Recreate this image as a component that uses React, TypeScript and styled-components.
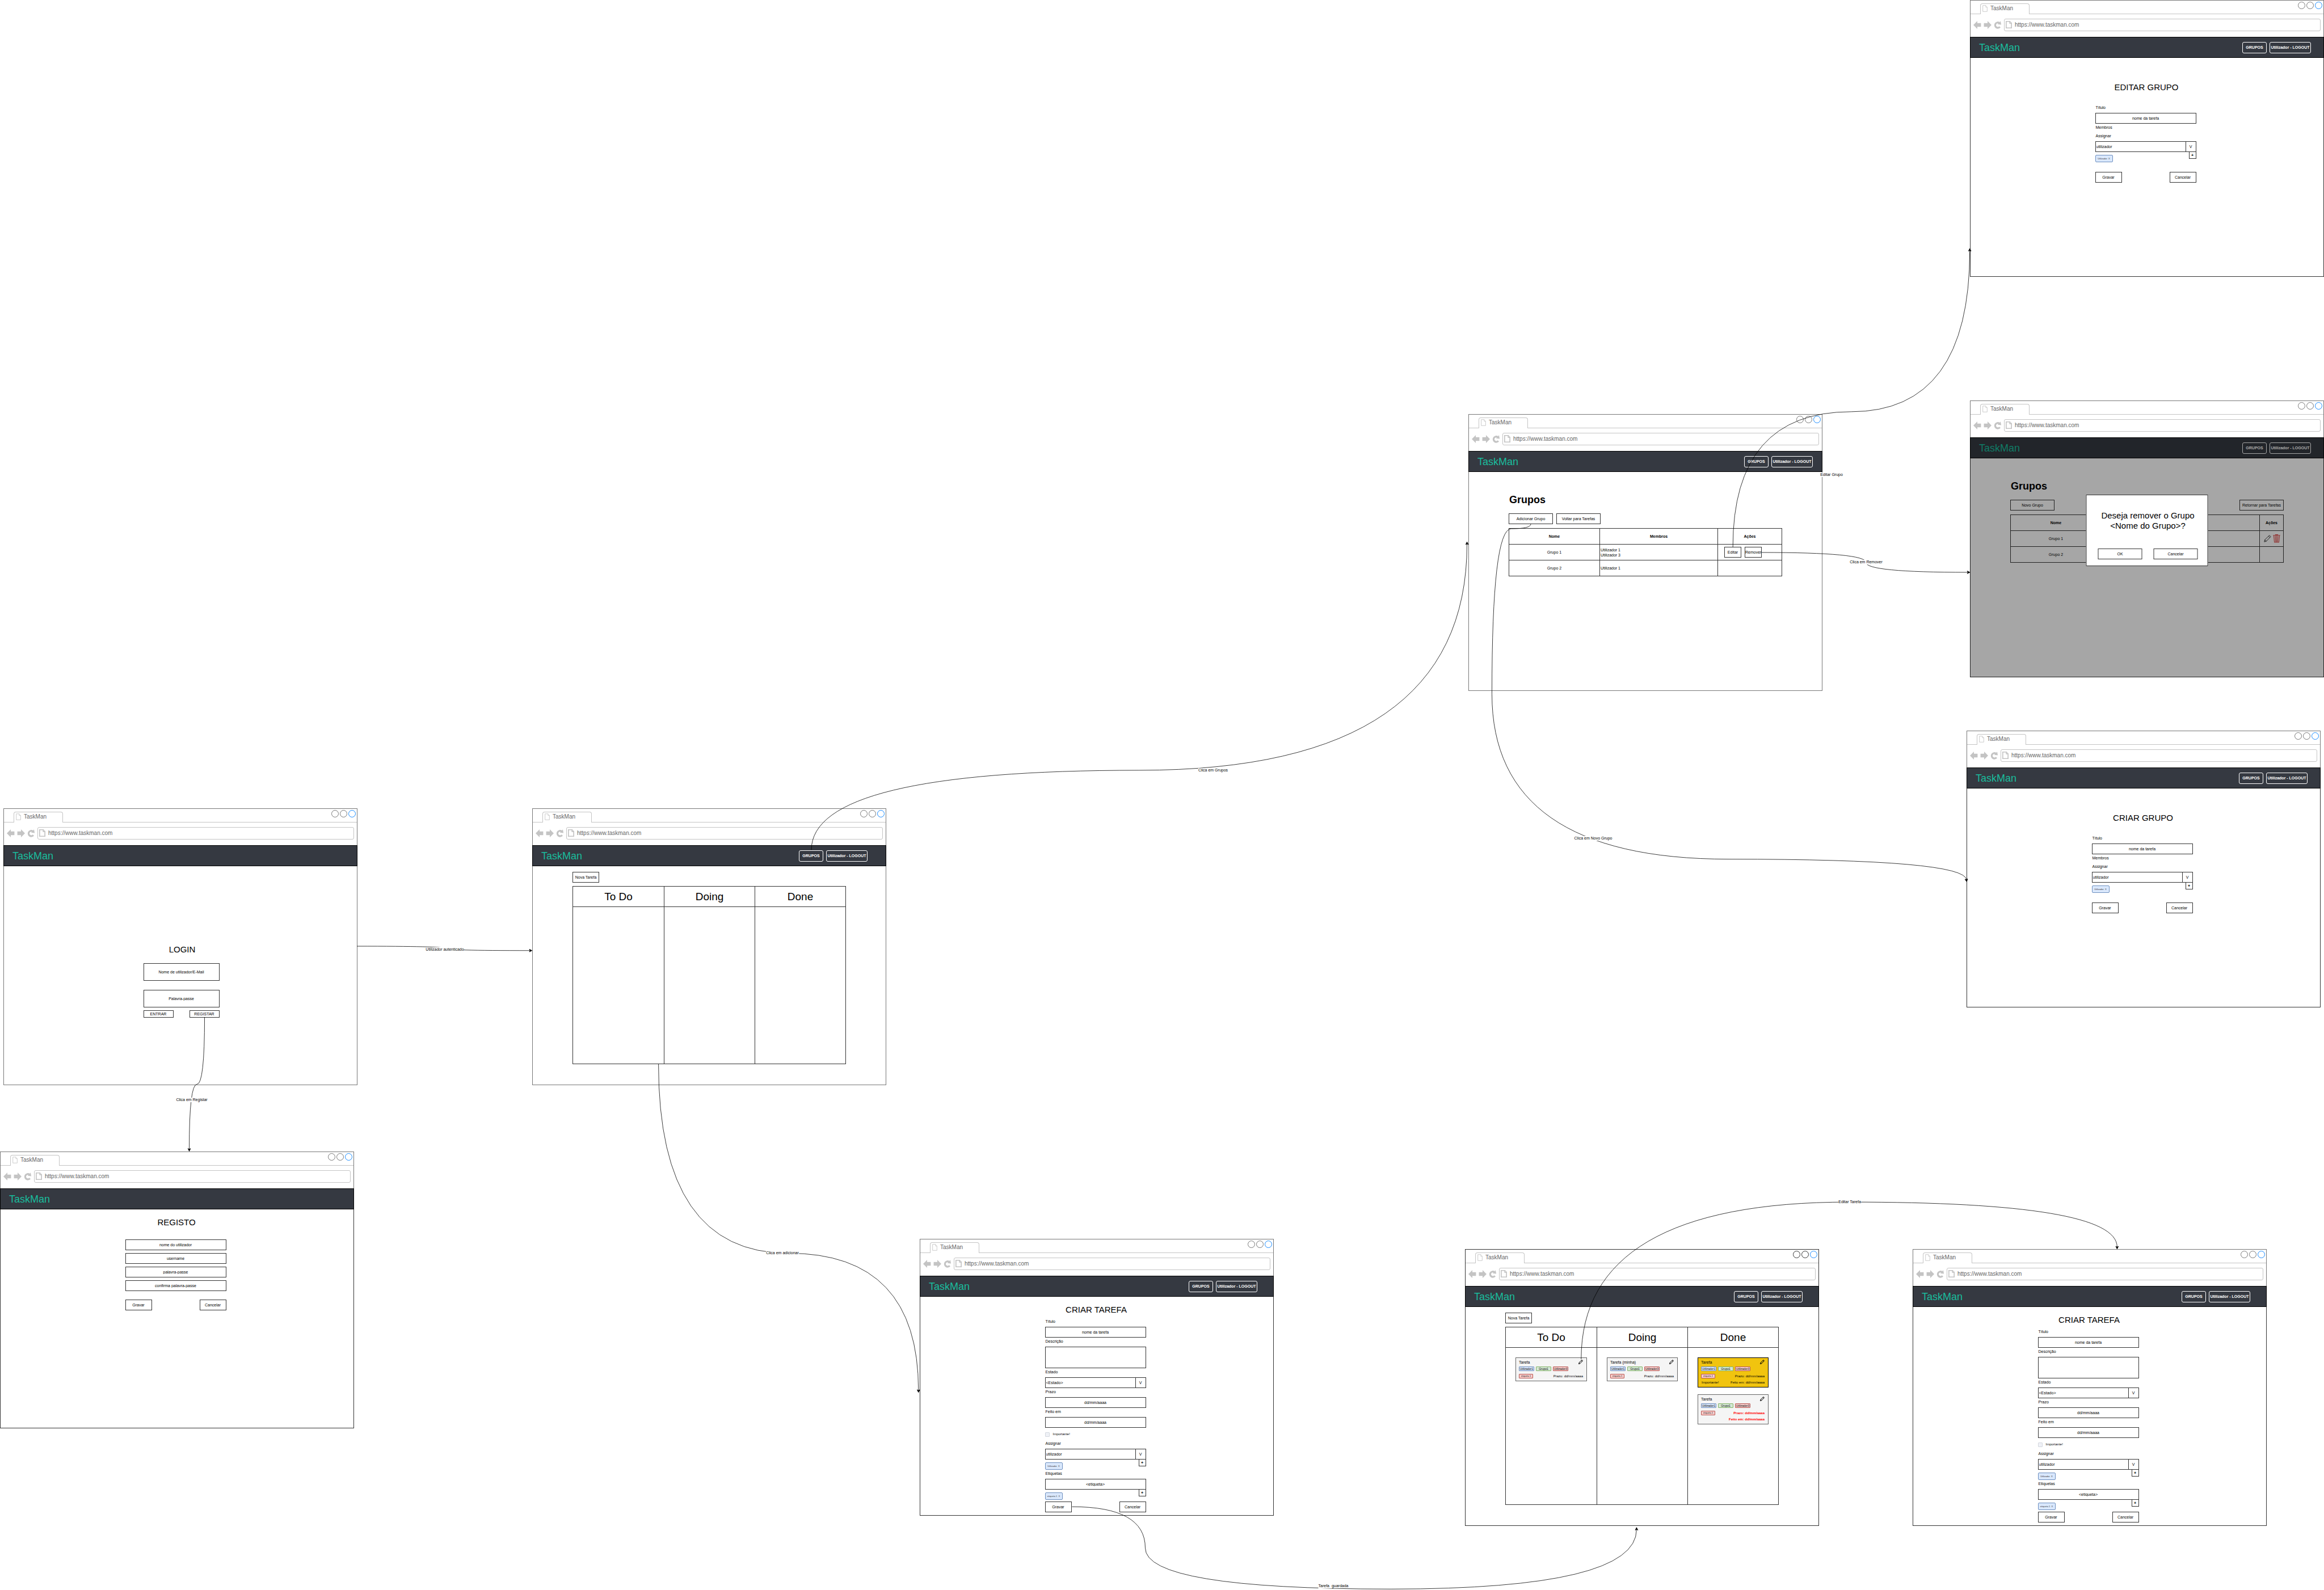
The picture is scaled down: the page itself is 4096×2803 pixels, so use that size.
import React, { useId } from "react";
import styled, { createGlobalStyle, css } from "styled-components";

const LINE = "#333333";
const FRAME = "#777777";

const GlobalStyle = createGlobalStyle`
  *, *::before, *::after { box-sizing: border-box; }
  html, body { margin: 0; padding: 0; background: #ffffff; }
  body, button, input, select, textarea {
    font-family: "Liberation Sans", Arial, sans-serif;
    font-size: 7px;
    line-height: 9px;
    color: #000000;
  }
  button, input, select, textarea { margin: 0; padding: 0; border-radius: 0; appearance: none; }
  h1, h2, p { margin: 0; font-weight: normal; }
`;

/* ---------- canvas ---------- */

const Canvas = styled.main`
  position: relative;
  min-height: 100vh;
  overflow: hidden;
`;

const Connectors = styled.svg`
  position: absolute;
  inset: 0;
  width: 100%;
  height: 100%;
  overflow: visible;
  pointer-events: none;
`;

const EdgeLabel = styled.span<{ $x: number; $y: number }>`
  position: absolute;
  left: ${(p) => p.$x}px;
  top: ${(p) => p.$y}px;
  transform: translate(-50%, -50%);
  background: #ffffff;
  line-height: 8px;
  white-space: pre;
`;

/* ---------- browser window ---------- */

const Window = styled.section<{ $x: number; $y: number; $frame: string }>`
  position: absolute;
  left: ${(p) => p.$x}px;
  top: ${(p) => p.$y}px;
  width: 624px;
  min-height: 488px;
  display: flex;
  flex-direction: column;
  border: 1px solid ${(p) => p.$frame};
  background: #ffffff;
`;

const TabStrip = styled.div`
  display: flex;
  justify-content: space-between;
  align-items: flex-start;
  height: 24px;
  padding: 2px 2px 0 17px;
  border-bottom: 1px solid #c4c4c4;
`;

const Tab = styled.div`
  display: flex;
  align-items: center;
  gap: 5px;
  width: 87px;
  height: 19px;
  margin-top: 3px;
  padding: 0 3px 2px;
  border: 1px solid #c4c4c4;
  border-bottom: 0;
  border-radius: 4px 4px 0 0;
  background: #ffffff;
  color: #666666;
  font-size: 10px;
  line-height: 12px;
`;

const WindowDots = styled.div`
  display: flex;
  gap: 2px;
`;

const Dot = styled.button<{ $color: string }>`
  width: 13px;
  height: 13px;
  border: 1px solid ${(p) => p.$color};
  border-radius: 50%;
  background: #ffffff;
`;

const Toolbar = styled.div`
  display: flex;
  align-items: center;
  height: 40px;
  padding: 0 5px 3px;
`;

const ToolButton = styled.button`
  display: flex;
  width: 14px;
  height: 16px;
  margin-right: 4px;
  border: 0;
  background: none;
`;

const AddressBar = styled.div`
  flex: 1;
  display: flex;
  align-items: center;
  gap: 5px;
  height: 22px;
  padding: 0 2px;
  border: 1px solid #c4c4c4;
  border-radius: 3px;
`;

const AddressInput = styled.input`
  flex: 1;
  border: 0;
  outline: 0;
  background: none;
  color: #666666;
  font-size: 10px;
  line-height: 12px;
  height: 14px;
`;

const Page = styled.div<{ $frame: string }>`
  position: relative;
  flex: 1;
  display: flex;
  flex-direction: column;
  margin: 0 -1px -1px;
  border: 1px solid ${(p) => p.$frame};
  border-top: 0;
`;

const NavBar = styled.header<{ $end: number }>`
  display: flex;
  align-items: center;
  gap: 5px;
  height: 37px;
  margin: 0 -1px;
  padding: 0 ${(p) => p.$end}px 0 15px;
  border: 1px solid #000000;
  background: #353941;
`;

const Brand = styled.h1`
  margin-right: auto;
  color: #1abc9c;
  font-size: 18px;
  line-height: 20px;
`;

const NavButton = styled.button<{ $wide?: boolean }>`
  width: ${(p) => (p.$wide ? 73 : 43)}px;
  height: 20px;
  border: 1px solid #ffffff;
  border-radius: 3px;
  background: none;
  color: #ffffff;
  font-weight: bold;
  white-space: nowrap;
`;

/* ---------- shared controls ---------- */

const box = css`
  border: 1px solid ${LINE};
  background: #ffffff;
`;

const Button = styled.button<{ $w?: number; $h?: number; $clear?: boolean }>`
  ${box}
  width: ${(p) => p.$w ?? 47}px;
  height: ${(p) => p.$h ?? 19}px;
  white-space: nowrap;
  ${(p) => p.$clear && "background: none;"}
`;

const TextInput = styled.input<{ $tall?: boolean }>`
  ${box}
  display: block;
  width: 100%;
  height: ${(p) => (p.$tall ? 31 : 19)}px;
  text-align: center;
  &::placeholder { color: #000000; opacity: 1; }
`;

const TextArea = styled.textarea`
  ${box}
  display: block;
  width: 100%;
  height: 38px;
  resize: none;
`;

const SelectBox = styled.div`
  ${box}
  display: flex;
  height: 19px;
`;

const NativeSelect = styled.select`
  flex: 1;
  border: 0;
  padding-left: 1px;
  background: none;
`;

const SelectArrow = styled.span`
  display: flex;
  align-items: center;
  justify-content: center;
  width: 18px;
  border-left: 1px solid ${LINE};
`;

const Row = styled.div<{ $top: number }>`
  display: flex;
  justify-content: space-between;
  margin-top: ${(p) => p.$top}px;
`;

/* ---------- forms ---------- */

const FormPage = styled.div<{ $top: number; $left?: number }>`
  display: flex;
  flex-direction: column;
  align-items: center;
  padding: ${(p) => p.$top}px 2px 0 ${(p) => p.$left ?? 0}px;
`;

const PageTitle = styled.h2<{ $gap: number }>`
  margin-bottom: ${(p) => p.$gap}px;
  font-size: 15px;
  line-height: 18px;
`;

const Form = styled.form<{ $w?: number }>`
  width: ${(p) => p.$w ?? 178}px;
  margin-right: 3px;
`;

const Stack = styled.div<{ $gap: number }>`
  display: flex;
  flex-direction: column;
  gap: ${(p) => p.$gap}px;
`;

const FieldBlock = styled.div`
  & + & { margin-top: 2px; }
`;

const Label = styled.label`
  display: block;
  margin-bottom: 4px;
  padding-left: 1px;
  line-height: 10px;
`;

const SectionLabel = styled.p`
  margin-bottom: 5px;
  padding-left: 1px;
  line-height: 10px;
`;

const CheckLabel = styled.label`
  display: flex;
  align-items: center;
  gap: 6px;
  height: 19px;
  font-size: 6px;
`;

const CheckBox = styled.input`
  width: 8px;
  height: 8px;
  border: 1px solid #d3d7de;
  border-radius: 1px;
  background: #f0f2f7;
`;

const TagRow = styled.div`
  display: flex;
  justify-content: space-between;
  height: 18px;
`;

const Chip = styled.span`
  align-self: flex-end;
  width: 31px;
  height: 13px;
  border: 1px solid #6c8ebf;
  border-radius: 2px;
  background: #dae8fc;
  color: #333333;
  font-size: 4px;
  line-height: 11px;
  text-align: center;
  white-space: pre;
`;

const AddButton = styled.button`
  ${box}
  width: 13px;
  height: 13px;
  margin-top: -1px;
  font-weight: bold;
`;

/* ---------- board ---------- */

const BoardPage = styled.div`
  flex: 1;
  display: flex;
  flex-direction: column;
  align-items: flex-start;
  gap: 6px;
  padding: 10px 70px 36px;
`;

const Board = styled.div`
  flex: 1;
  align-self: stretch;
  display: grid;
  grid-template-columns: repeat(3, 1fr);
  border: 1px solid ${LINE};
`;

const Column = styled.section`
  & + & { border-left: 1px solid ${LINE}; }
`;

const ColumnTitle = styled.h2`
  height: 36px;
  border-bottom: 1px solid ${LINE};
  font-size: 19px;
  line-height: 35px;
  text-align: center;
`;

const CardList = styled.div`
  display: flex;
  flex-direction: column;
  gap: 12px;
  padding: 17px;
`;

const CardBox = styled.article<{ $gold?: boolean }>`
  padding: 2px 6px 4px 5px;
  border: 1px solid ${(p) => (p.$gold ? "#000000" : "#666666")};
  background: ${(p) => (p.$gold ? "#f1c40f" : "#f5f5f5")};
`;

const CardTop = styled.div`
  display: flex;
  justify-content: space-between;
  align-items: center;
  height: 10px;
`;

const IconButton = styled.button`
  display: flex;
  border: 0;
  background: none;
`;

const TagLine = styled.div`
  display: flex;
  gap: 3px;
  margin: 3px 0 5px;
`;

const tones = {
  blue: ["#dae8fc", "#6c8ebf"],
  green: ["#d5e8d4", "#82b366"],
  red: ["#f8cecc", "#b85450"],
};

const Tag = styled.span<{ $tone: keyof typeof tones; $small?: boolean }>`
  display: flex;
  justify-content: center;
  width: ${(p) => (p.$small ? 25 : 27)}px;
  height: 8px;
  border: 1px solid ${(p) => tones[p.$tone][1]};
  border-radius: 1px;
  background: ${(p) => tones[p.$tone][0]};
  font-size: ${(p) => (p.$small ? 4 : 5)}px;
  line-height: 6px;
  white-space: nowrap;
`;

const CardMeta = styled.div<{ $late?: boolean }>`
  display: flex;
  align-items: center;
  justify-content: space-between;
  height: 8px;
  font-size: 6px;
  line-height: 8px;
  & + & { margin-top: 3px; }
  time {
    margin-left: auto;
    ${(p) => p.$late && "color: #ff0000; font-weight: bold;"}
  }
`;

const Flag = styled.span`
  padding-left: 1px;
`;

/* ---------- groups ---------- */

const GroupsPage = styled.div`
  flex: 1;
  padding: 39px 70px 0;
`;

const GroupsTitle = styled.h2`
  margin-bottom: 14px;
  padding-left: 1px;
  font-size: 18px;
  font-weight: bold;
  line-height: 20px;
`;

const Actions = styled.div<{ $apart?: boolean }>`
  display: flex;
  gap: 6px;
  justify-content: ${(p) => (p.$apart ? "space-between" : "flex-start")};
  margin-bottom: 7px;
`;

const GroupTable = styled.table`
  width: 100%;
  border-collapse: collapse;
  table-layout: fixed;
  text-align: center;
  th, td { height: 28px; padding: 0 1px; border: 1px solid ${LINE}; }
`;

const NameCol = styled.col`
  width: 160px;
`;

const ActionCol = styled.col<{ $w: number }>`
  width: ${(p) => p.$w}px;
`;

const Members = styled.td`
  text-align: left;
`;

const CellActions = styled.div<{ $icons?: boolean }>`
  display: flex;
  align-items: center;
  gap: ${(p) => (p.$icons ? 3 : 6)}px;
  padding-left: ${(p) => (p.$icons ? 6 : 10)}px;
`;

const Shade = styled.div`
  position: absolute;
  inset: 0 -1px -1px;
  background: rgba(0, 0, 0, 0.35);
`;

const Dialog = styled.div`
  position: absolute;
  top: 101px;
  left: 50%;
  width: 215px;
  transform: translateX(-50%);
  padding: 27px 17px 11px 20px;
  border: 1px solid ${LINE};
  background: #ffffff;
`;

const DialogText = styled.p`
  font-size: 15px;
  line-height: 18px;
  text-align: center;
`;

/* ---------- icons ---------- */

const DocIcon = ({ w, h, stroke }: { w: number; h: number; stroke: number }) => (
  <svg width={w} height={h} viewBox="0 0 16 20" preserveAspectRatio="none" fill="#ffffff" stroke="#c4c4c4" strokeWidth={stroke}>
    <path d="M1.2 1.2H10.5L14.8 6V18.8H1.2Z" />
    <path d="M10.5 1.2V6H14.8" />
  </svg>
);

const BackIcon = () => (
  <svg width="14" height="16" viewBox="0 0 24 26" fill="#c4c4c4">
    <path d="M0 13L12 1V7.5H23V18.5H12V25Z" />
  </svg>
);

const ForwardIcon = () => (
  <svg width="14" height="16" viewBox="0 0 24 26" fill="#c4c4c4">
    <path d="M24 13L12 1V7.5H1V18.5H12V25Z" />
  </svg>
);

const ReloadIcon = () => (
  <svg width="14" height="16" viewBox="0 0 24 26">
    <path d="M18.5 18.5A8 8 0 1 1 16.5 6.8" fill="none" stroke="#c4c4c4" strokeWidth="5.6" />
    <path d="M20.5 1.5L22.5 12.2L11.8 11Z" fill="#c4c4c4" />
  </svg>
);

const PencilIcon = ({ size, stroke }: { size: number; stroke: number }) => (
  <svg width={size} height={size} viewBox="0 0 24 24" fill="none" stroke="#000000" strokeWidth={stroke} strokeLinejoin="round">
    <path d="M1.5 22.5L3 16L17.5 1.8C18.3 1 22.8 5 22 6L8 20.5Z" />
    <path d="M3 16L8 20.5M15 4.2L19.6 8.6" />
  </svg>
);

const TrashIcon = () => (
  <svg width="13" height="15" viewBox="0 0 22 25" fill="none" stroke="#e0524f" strokeWidth="2">
    <path d="M0.5 2.8H21.5M7.5 2.2V1H14.5V2.2" />
    <path d="M2.5 3.5L4.5 23.5H17.5L19.5 3.5" />
    <path d="M7 4L8 23M11 4V23M15 4L14 23" />
  </svg>
);

/* ---------- building blocks ---------- */

type FrameProps = {
  x: number;
  y: number;
  frame?: string;
  pageFrame?: string;
  navEnd?: number;
  overlay?: React.ReactNode;
  children: React.ReactNode;
};

function BrowserWindow({ x, y, frame = FRAME, pageFrame = LINE, navEnd, overlay, children }: FrameProps) {
  return (
    <Window $x={x} $y={y} $frame={frame}>
      <TabStrip>
        <Tab>
          <DocIcon w={9} h={12} stroke={1.5} />
          TaskMan
        </Tab>
        <WindowDots>
          <Dot type="button" $color={frame} />
          <Dot type="button" $color={frame} />
          <Dot type="button" $color="#1a8cff" />
        </WindowDots>
      </TabStrip>
      <Toolbar>
        <ToolButton type="button"><BackIcon /></ToolButton>
        <ToolButton type="button"><ForwardIcon /></ToolButton>
        <ToolButton type="button"><ReloadIcon /></ToolButton>
        <AddressBar>
          <DocIcon w={11} h={13} stroke={2.4} />
          <AddressInput aria-label="URL" defaultValue="https://www.taskman.com" />
        </AddressBar>
      </Toolbar>
      <Page $frame={pageFrame}>
        <NavBar $end={navEnd ?? 28}>
          <Brand>TaskMan</Brand>
          {navEnd !== undefined && (
            <>
              <NavButton type="button">GRUPOS</NavButton>
              <NavButton type="button" $wide>Utilizador - LOGOUT</NavButton>
            </>
          )}
        </NavBar>
        {children}
        {overlay}
      </Page>
    </Window>
  );
}

function InputField({ label, prompt }: { label: string; prompt: string }) {
  const id = useId();
  return (
    <FieldBlock>
      <Label htmlFor={id}>{label}</Label>
      <TextInput id={id} placeholder={prompt} />
    </FieldBlock>
  );
}

function AreaField({ label }: { label: string }) {
  const id = useId();
  return (
    <FieldBlock>
      <Label htmlFor={id}>{label}</Label>
      <TextArea id={id} />
    </FieldBlock>
  );
}

function Tags({ tag }: { tag: string }) {
  return (
    <TagRow>
      <Chip>{tag}{"  X"}</Chip>
      <AddButton type="button">+</AddButton>
    </TagRow>
  );
}

function SelectField({ label, option, tag }: { label: string; option: string; tag?: string }) {
  const id = useId();
  return (
    <FieldBlock>
      <Label htmlFor={id}>{label}</Label>
      <SelectBox>
        <NativeSelect id={id}>
          <option>{option}</option>
        </NativeSelect>
        <SelectArrow>V</SelectArrow>
      </SelectBox>
      {tag && <Tags tag={tag} />}
    </FieldBlock>
  );
}

function SaveCancel({ top }: { top: number }) {
  return (
    <Row $top={top}>
      <Button type="button">Gravar</Button>
      <Button type="button">Cancelar</Button>
    </Row>
  );
}

function TaskForm() {
  const tagId = useId();
  return (
    <FormPage $top={14}>
      <PageTitle $gap={7}>CRIAR TAREFA</PageTitle>
      <Form>
        <InputField label="Título" prompt="nome da tarefa" />
        <AreaField label="Descrição" />
        <SelectField label="Estado" option="<Estado>" />
        <InputField label="Prazo" prompt="dd/mm/aaaa" />
        <InputField label="Feito em" prompt="dd/mm/aaaa" />
        <FieldBlock>
          <CheckLabel>
            <CheckBox type="checkbox" />
            Importante!
          </CheckLabel>
        </FieldBlock>
        <SelectField label="Assignar" option="utilizador" tag="Utilizador" />
        <FieldBlock>
          <Label htmlFor={tagId}>Etiquetas</Label>
          <TextInput id={tagId} placeholder="<etiqueta>" />
          <Tags tag="etiqueta 1" />
        </FieldBlock>
        <SaveCancel top={3} />
      </Form>
    </FormPage>
  );
}

function GroupForm({ title }: { title: string }) {
  return (
    <FormPage $top={43}>
      <PageTitle $gap={22}>{title}</PageTitle>
      <Form>
        <InputField label="Título" prompt="nome da tarefa" />
        <FieldBlock>
          <SectionLabel>Membros</SectionLabel>
          <SelectField label="Assignar" option="utilizador" tag="Utilizador" />
        </FieldBlock>
        <SaveCancel top={17} />
      </Form>
    </FormPage>
  );
}

type Task = { title: string; note?: string; done?: boolean; gold?: boolean; late?: boolean; important?: boolean };

function TaskCard({ task }: { task: Task }) {
  return (
    <CardBox $gold={task.gold}>
      <CardTop>
        <span>{task.title}{task.note}</span>
        <IconButton type="button"><PencilIcon size={8} stroke={3} /></IconButton>
      </CardTop>
      <TagLine>
        <Tag $tone="blue">Utilizador1</Tag>
        <Tag $tone="green">Grupo1</Tag>
        <Tag $tone="red">Utilizador3</Tag>
      </TagLine>
      <CardMeta $late={task.late}>
        <Tag $tone="red" $small>etiqueta 1</Tag>
        <time>Prazo: dd/mm/aaaa</time>
      </CardMeta>
      {task.done && (
        <CardMeta $late={task.late}>
          {task.important && <Flag>Importante!</Flag>}
          <time>Feito em: dd/mm/aaaa</time>
        </CardMeta>
      )}
    </CardBox>
  );
}

function BoardView({ tasks }: { tasks: Record<string, Task[]> }) {
  return (
    <BoardPage>
      <Button type="button">Nova Tarefa</Button>
      <Board>
        {Object.entries(tasks).map(([name, list]) => (
          <Column key={name}>
            <ColumnTitle>{name}</ColumnTitle>
            <CardList>
              {list.map((task, i) => (
                <TaskCard key={i} task={task} />
              ))}
            </CardList>
          </Column>
        ))}
      </Board>
    </BoardPage>
  );
}

const emptyBoard: Record<string, Task[]> = { "To Do": [], Doing: [], Done: [] };

const filledBoard: Record<string, Task[]> = {
  "To Do": [{ title: "Tarefa" }],
  Doing: [{ title: "Tarefa", note: " (minha)" }],
  Done: [
    { title: "Tarefa", done: true, gold: true, important: true },
    { title: "Tarefa", done: true, late: true },
  ],
};

/* ---------- connectors ---------- */

type Edge = { d: string; tip: [number, number, number] };

// Tip: x, y and the heading in degrees (0 points right).
const edges: Edge[] = [
  { d: "M1060 2810.5Q1320 2810.5 1320 2817Q1320 2823.5 1574 2823.5", tip: [1580, 2823.5, 0] },
  { d: "M607.5 3021Q607.5 3220.5 585 3220.5Q562 3220.5 562 3414", tip: [562, 3419.5, 90] },
  { d: "M1955.5 3160.5Q1955.5 3722.5 2341 3722.5Q2727.5 3722.5 2727.5 4130", tip: [2727.5, 4136, 90] },
  { d: "M2409.5 2524.5Q2409.5 2288 3383 2288Q4356.5 2288 4356.5 1615", tip: [4356.5, 1609.5, -90] },
  { d: "M4546 1556Q4546 1570.5 4488 1570.5Q4430.5 1570.5 4430.5 2061Q4430.5 2552 5134 2552Q5839 2552 5840 2614", tip: [5840.5, 2619, 80] },
  { d: "M5146 1625.5Q5146 1223 5497 1223Q5849.5 1223 5849.5 744", tip: [5849.5, 738, -90] },
  { d: "M5231 1641Q5541 1641 5541 1670.5Q5541 1700 5844 1700", tip: [5850, 1700, 0] },
  { d: "M3183.5 4475.5Q3401 4475.5 3401 4598Q3401 4720 4130 4720Q4860 4720 4860 4543", tip: [4860, 4537, -90] },
  { d: "M4695.5 4037.5Q4695.5 3570.5 5491 3570.5Q6287 3570.5 6287 3704", tip: [6287, 3710, 90] },
];

const labels: { text: string; x: number; y: number }[] = [
  { text: "Utilizador autenticado", x: 784, y: 1674 },
  { text: "Clica em Registar", x: 338, y: 1939 },
  { text: "Clica em adicionar", x: 1379, y: 2209 },
  { text: "Clica em Grupos", x: 2138, y: 1358 },
  { text: "Clica em Novo Grupo", x: 2808, y: 1478 },
  { text: "Editar Grupo", x: 3228, y: 837 },
  { text: "Clica em Remover", x: 3289, y: 991 },
  { text: "Tarefa  guardada", x: 2350, y: 2796 },
  { text: "Editar Tarefa", x: 3260, y: 2119 },
];

export default function App() {
  return (
    <Canvas>
      <GlobalStyle />

      <BrowserWindow x={6} y={1425} pageFrame={FRAME}>
        <FormPage $top={138} $left={8}>
          <PageTitle $gap={15}>LOGIN</PageTitle>
          <Form $w={134}>
            <Stack $gap={16}>
              <TextInput $tall aria-label="Nome de utilizador/E-Mail" placeholder="Nome de utilizador/E-Mail" />
              <TextInput $tall aria-label="Palavra-passe" placeholder="Palavra-passe" />
            </Stack>
            <Row $top={5}>
              <Button type="button" $w={53} $h={13}>ENTRAR</Button>
              <Button type="button" $w={53} $h={13}>REGISTAR</Button>
            </Row>
          </Form>
        </FormPage>
      </BrowserWindow>

      <BrowserWindow x={938} y={1425} pageFrame={FRAME} navEnd={32}>
        <BoardView tasks={emptyBoard} />
      </BrowserWindow>

      <BrowserWindow x={0} y={2030}>
        <FormPage $top={14}>
          <PageTitle $gap={21}>REGISTO</PageTitle>
          <Form>
            <Stack $gap={5}>
              {["nome do utilizador", "username", "palavra-passe", "confirma palavra-passe"].map((text) => (
                <TextInput key={text} aria-label={text} placeholder={text} />
              ))}
            </Stack>
            <SaveCancel top={15} />
          </Form>
        </FormPage>
      </BrowserWindow>

      <BrowserWindow x={1621} y={2184} navEnd={28}>
        <TaskForm />
      </BrowserWindow>

      <BrowserWindow x={2582} y={2202} frame={LINE} navEnd={28}>
        <BoardView tasks={filledBoard} />
      </BrowserWindow>

      <BrowserWindow x={3371} y={2202} navEnd={28}>
        <TaskForm />
      </BrowserWindow>

      <BrowserWindow x={2588} y={730} pageFrame={FRAME} navEnd={16}>
        <GroupsPage>
          <GroupsTitle>Grupos</GroupsTitle>
          <Actions>
            <Button type="button" $w={78}>Adicionar Grupo</Button>
            <Button type="button" $w={78}>Voltar para Tarefas</Button>
          </Actions>
          <GroupTable>
            <colgroup>
              <NameCol />
              <col />
              <ActionCol $w={113} />
            </colgroup>
            <thead>
              <tr><th>Nome</th><th>Membros</th><th>Ações</th></tr>
            </thead>
            <tbody>
              <tr>
                <td>Grupo 1</td>
                <Members>Utilizador 1<br />Utilizador 3</Members>
                <td>
                  <CellActions>
                    <Button type="button" $w={30}>Editar</Button>
                    <Button type="button" $w={30}>Remover</Button>
                  </CellActions>
                </td>
              </tr>
              <tr>
                <td>Grupo 2</td>
                <Members>Utilizador 1</Members>
                <td />
              </tr>
            </tbody>
          </GroupTable>
        </GroupsPage>
      </BrowserWindow>

      <BrowserWindow x={3472} y={0} navEnd={22}>
        <GroupForm title="EDITAR GRUPO" />
      </BrowserWindow>

      <BrowserWindow
        x={3472}
        y={706}
        navEnd={22}
        overlay={
          <>
            <Shade />
            <Dialog role="dialog">
              <DialogText>Deseja remover o Grupo<br />&lt;Nome do Grupo&gt;?</DialogText>
              <Row $top={31}>
                <Button type="button" $w={78}>OK</Button>
                <Button type="button" $w={78}>Cancelar</Button>
              </Row>
            </Dialog>
          </>
        }
      >
        <GroupsPage>
          <GroupsTitle>Grupos</GroupsTitle>
          <Actions $apart>
            <Button type="button" $w={78} $clear>Novo Grupo</Button>
            <Button type="button" $w={78} $clear>Retornar para Tarefas</Button>
          </Actions>
          <GroupTable>
            <colgroup>
              <NameCol />
              <col />
              <ActionCol $w={42} />
            </colgroup>
            <thead>
              <tr><th>Nome</th><th /><th>Ações</th></tr>
            </thead>
            <tbody>
              <tr>
                <td>Grupo 1</td>
                <td />
                <td>
                  <CellActions $icons>
                    <IconButton type="button"><PencilIcon size={13} stroke={1.4} /></IconButton>
                    <IconButton type="button"><TrashIcon /></IconButton>
                  </CellActions>
                </td>
              </tr>
              <tr><td>Grupo 2</td><td /><td /></tr>
            </tbody>
          </GroupTable>
        </GroupsPage>
      </BrowserWindow>

      <BrowserWindow x={3466} y={1288} navEnd={22}>
        <GroupForm title="CRIAR GRUPO" />
      </BrowserWindow>

      <Connectors>
        <g transform="scale(0.5935)" fill="none" stroke="#000000" strokeWidth="1.3">
          {edges.map((edge) => (
            <g key={edge.d}>
              <path d={edge.d} />
              <path
                d="M0 0L-8 -4L-6 0L-8 4Z"
                fill="#000000"
                transform={`translate(${edge.tip[0]} ${edge.tip[1]}) rotate(${edge.tip[2]})`}
              />
            </g>
          ))}
        </g>
      </Connectors>

      {labels.map((label) => (
        <EdgeLabel key={label.text} $x={label.x} $y={label.y}>{label.text}</EdgeLabel>
      ))}
    </Canvas>
  );
}
